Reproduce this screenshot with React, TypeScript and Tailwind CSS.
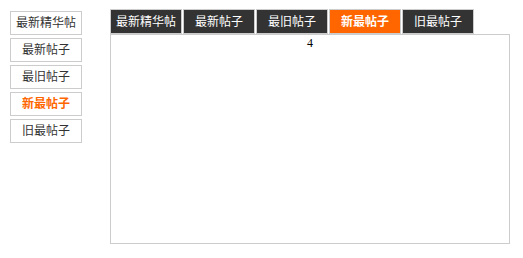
import React from "react";

const left = ["最新精华帖", "最新帖子", "最旧帖子", "新最帖子", "旧最帖子"];
const tabs = ["最新精华帖", "最新帖子", "最旧帖子", "新最帖子", "旧最帖子"];
const active = 3;

export default function App() {
  return (
    <div
      className="w-[523px] h-[258px] bg-white flex items-start"
      style={{ fontFamily: '"Liberation Sans", "Noto Sans CJK SC", sans-serif' }}
    >
      <div className="ml-[10px] mt-[11px] flex flex-col gap-[3px]">
        {left.map((t, i) => (
          <div
            key={t}
            className={`w-[72px] h-[24px] border border-[#cccccc] flex items-center justify-center text-[12px] leading-none ${
              i === active ? "text-[#ff6600] font-bold" : "text-[#333333]"
            }`}
          >
            {t}
          </div>
        ))}
      </div>
      <div className="ml-[28px] mt-[9px] flex flex-col">
        <div className="flex gap-[1px]">
          {tabs.map((t, i) => (
            <div
              key={t}
              className={`w-[72px] h-[25px] border border-[#cccccc] flex items-center justify-center text-[12px] leading-none text-white ${
                i === active ? "bg-[#ff6600] font-bold" : "bg-[#333333]"
              }`}
            >
              {t}
            </div>
          ))}
        </div>
        <div className="w-[400px] h-[210px] border border-[#cccccc] flex justify-center">
          <span
            className="text-[12px] leading-[14px] text-black mt-[1px]"
            style={{ fontFamily: '"Liberation Serif", serif' }}
          >
            4
          </span>
        </div>
      </div>
    </div>
  );
}
